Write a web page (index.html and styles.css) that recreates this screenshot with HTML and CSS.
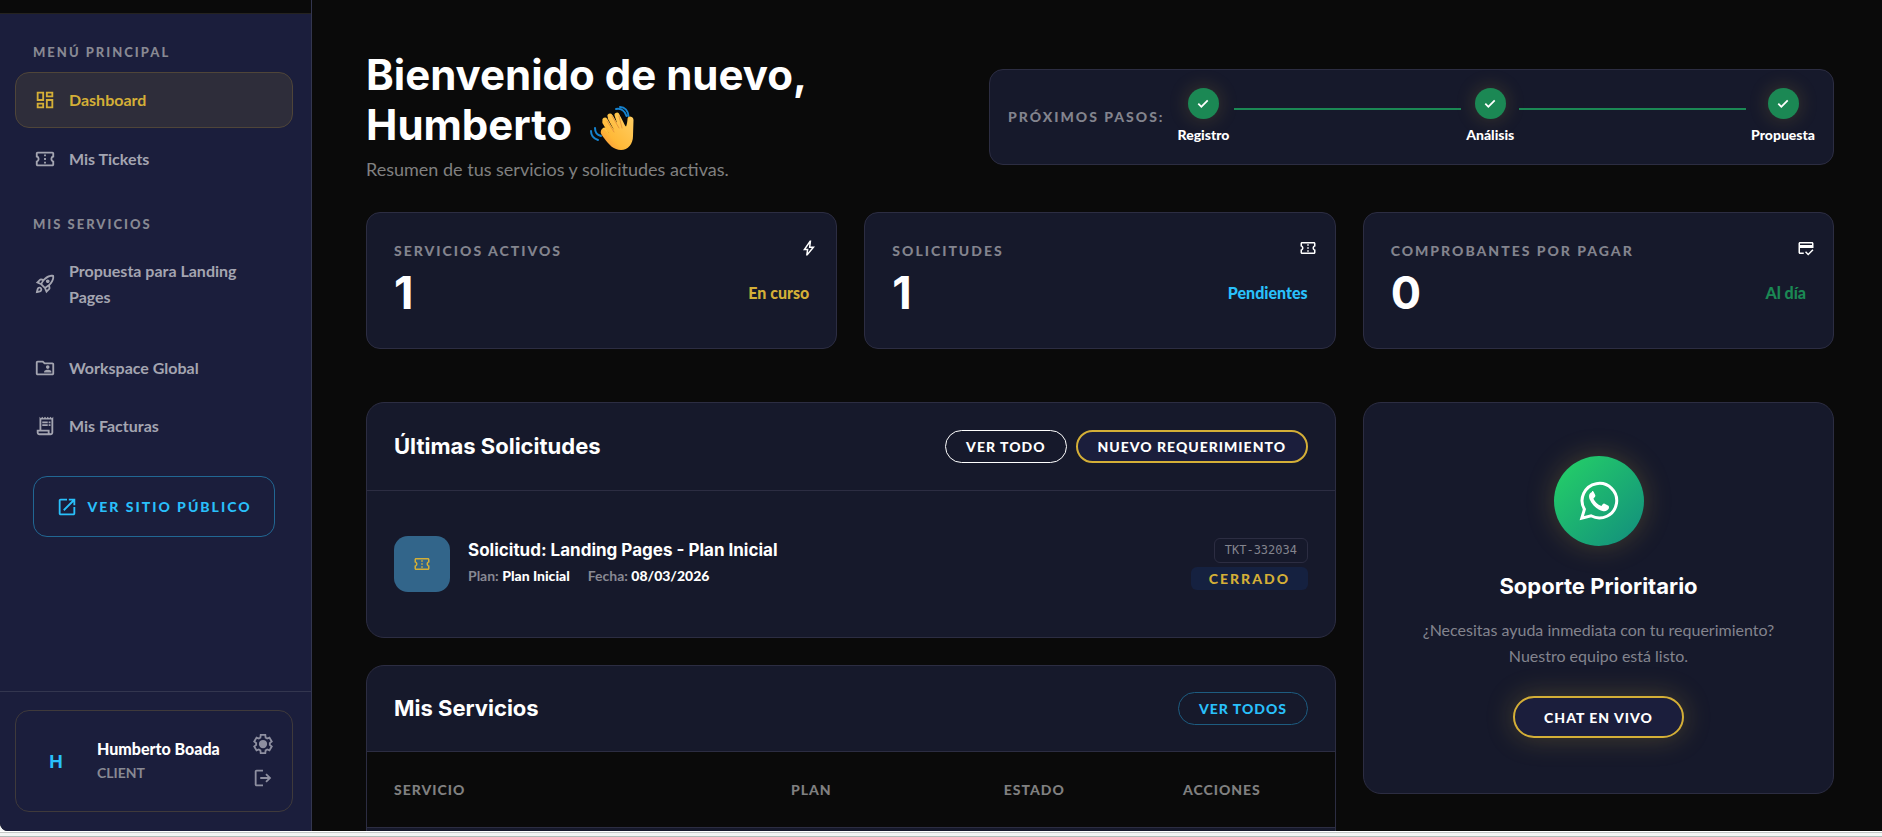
FILE: index.html
```html
<!DOCTYPE html>
<html lang="es">
<head>
    <meta charset="UTF-8">
    <meta name="viewport" content="width=device-width, initial-scale=1.0">
    <title>Dashboard</title>
    <link rel="stylesheet" href="styles.css">
</head>
<body>
    <svg class="sprite" aria-hidden="true">
        <symbol id="i-ticket" viewBox="0 0 24 24"><path d="M22 10V6c0-1.11-.9-2-2-2H4c-1.1 0-1.99.89-1.99 2v4c1.1 0 1.99.9 1.99 2s-.89 2-2 2v4c0 1.1.9 2 2 2h16c1.1 0 2-.9 2-2v-4c-1.1 0-2-.9-2-2s.9-2 2-2zm-2-1.46c-1.19.69-2 1.99-2 3.46s.81 2.77 2 3.46V18H4v-2.54c1.19-.69 2-1.99 2-3.46 0-1.48-.8-2.77-1.99-3.46L4 6h16v2.54zM11 15h2v2h-2zm0-4h2v2h-2zm0-4h2v2h-2z"/></symbol>
        <symbol id="i-check" viewBox="0 0 24 24"><path d="M9.5 18 4 12.5l1.9-1.9 3.6 3.6L18.1 5.6 20 7.5z"/></symbol>
    </svg>

    <div class="layout">
        <aside class="sidebar">
            <div class="sidebar-top"></div>
            <nav class="sidebar-nav">
                <h2 class="nav-title">MENÚ PRINCIPAL</h2>
                <a href="#" class="nav-link active">
                    <svg class="icon" viewBox="0 0 24 24"><path d="M19 5v2h-4V5h4M9 5v6H5V5h4m10 8v6h-4v-6h4M9 17v2H5v-2h4M21 3h-8v6h8V3zM11 3H3v10h8V3zm10 8h-8v10h8V11zm-10 4H3v6h8v-6z"/></svg>
                    Dashboard
                </a>
                <a href="#" class="nav-link">
                    <svg class="icon"><use href="#i-ticket"/></svg>
                    Mis Tickets
                </a>
                <h2 class="nav-title nav-title-services">MIS SERVICIOS</h2>
                <a href="#" class="nav-link nav-link-tall">
                    <svg class="icon" viewBox="0 0 24 24"><path d="M6 15c-.83 0-1.58.34-2.12.88C2.7 17.06 2 22 2 22s4.94-.7 6.12-1.88c.54-.54.88-1.29.88-2.12 0-1.66-1.34-3-3-3zm.71 3.71c-.28.28-2.17.76-2.17.76s.47-1.88.76-2.17c.17-.19.42-.3.7-.3.55 0 1 .45 1 1 0 .28-.11.53-.29.71zm10.71-5.06c6.36-6.36 4.24-11.31 4.24-11.31S16.71.22 10.35 6.58l-2.49-.5c-.65-.13-1.33.08-1.81.55L2 10.69l5 2.14L11.17 17l2.14 5 4.05-4.05c.47-.47.68-1.15.55-1.81l-.49-2.49zM7.41 10.83l-1.91-.82 1.97-1.97 1.44.29c-.57.83-1.08 1.7-1.5 2.5zm6.58 7.67l-.82-1.91c.8-.42 1.67-.93 2.49-1.5l.29 1.44-1.96 1.97zM16 12.24c-1.32 1.32-3.38 2.4-4.04 2.73l-2.93-2.93c.32-.65 1.4-2.71 2.73-4.04 4.68-4.68 8.23-3.99 8.23-3.99s.69 3.55-3.99 8.23zM15 11c1.1 0 2-.9 2-2s-.9-2-2-2-2 .9-2 2 .9 2 2 2z"/></svg>
                    Propuesta para Landing Pages
                </a>
                <a href="#" class="nav-link">
                    <svg class="icon" viewBox="0 0 24 24"><path d="M20 6h-8l-2-2H4c-1.1 0-1.99.9-1.99 2L2 18c0 1.1.9 2 2 2h16c1.1 0 2-.9 2-2V8c0-1.1-.9-2-2-2zm0 12H4V6h5.17l2 2H20v10z"/><circle cx="15" cy="11" r="2"/><path d="M19 17h-8v-1c0-1.33 2.67-2 4-2s4 .67 4 2v1z"/></svg>
                    Workspace Global
                </a>
                <a href="#" class="nav-link">
                    <svg class="icon" viewBox="0 0 24 24"><path d="M19.5 3.5L18 2l-1.5 1.5L15 2l-1.5 1.5L12 2l-1.5 1.5L9 2 7.5 3.5 6 2v14H3v3c0 1.66 1.34 3 3 3h12c1.66 0 3-1.34 3-3V2l-1.5 1.5zM15 20H6c-.55 0-1-.45-1-1v-1h10v2zm4-1c0 .55-.45 1-1 1s-1-.45-1-1v-3H8V5h11v14z"/><path d="M9 7h6v2H9zM16 7h2v2h-2zM9 10h6v2H9zM16 10h2v2h-2z"/></svg>
                    Mis Facturas
                </a>
                <a href="#" class="public-link">
                    <svg class="icon" viewBox="0 0 24 24"><path d="M19 19H5V5h7V3H5c-1.11 0-2 .9-2 2v14c0 1.1.89 2 2 2h14c1.1 0 2-.9 2-2v-7h-2v7zM14 3v2h3.59l-9.83 9.83 1.41 1.41L19 6.41V10h2V3h-7z"/></svg>
                    VER SITIO PÚBLICO
                </a>
            </nav>
            <div class="sidebar-footer">
                <div class="user-card">
                    <div class="avatar">H</div>
                    <div class="user-info">
                        <strong>Humberto Boada</strong>
                        <span>CLIENT</span>
                    </div>
                    <div class="user-actions">
                        <button type="button" aria-label="Configuración">
                            <svg class="icon" viewBox="0 0 24 24"><path class="outline" d="M19.43 12.98c.04-.32.07-.64.07-.98 0-.34-.03-.66-.07-.98l2.11-1.65-2.5-4.35-2.49 1c-.52-.4-1.08-.73-1.69-.98L14.5 2h-5l-.37 3.07c-.61.25-1.17.59-1.69.98l-2.49-1-2.5 4.32 2.12 1.65c-.04.32-.07.65-.07.98 0 .33.03.66.07.98l-2.12 1.65 2.5 4.35 2.49-1c.52.4 1.08.73 1.69.98L9.5 22h5l.37-3.07c.61-.25 1.17-.59 1.69-.98l2.49 1 2.5-4.32z"/><circle cx="12" cy="12" r="4.5"/></svg>
                        </button>
                        <button type="button" aria-label="Cerrar sesión">
                            <svg class="icon" viewBox="0 0 24 24"><path d="M5 5h7V3H5c-1.1 0-2 .9-2 2v14c0 1.1.9 2 2 2h7v-2H5V5z"/><path d="m16 17-1.4-1.45 2.55-2.55H9v-2h8.15L14.6 8.45 16 7l5 5-5 5z"/></svg>
                        </button>
                    </div>
                </div>
            </div>
        </aside>

        <main class="main">
            <header class="welcome">
                <div class="welcome-text">
                    <h1>Bienvenido de nuevo, Humberto
                        <svg class="wave" viewBox="0 0 44 44" role="img" aria-label="Saludo">
                            <defs>
                                <linearGradient id="skin" x1="0" y1="1" x2="1" y2="0">
                                    <stop offset="0" stop-color="#f58b3c"/>
                                    <stop offset=".35" stop-color="#ffb938"/>
                                    <stop offset="1" stop-color="#ffd066"/>
                                </linearGradient>
                            </defs>
                            <path class="motion" d="M1 25c0 4 2.5 7.5 7 9M5 22c0 4 2 7 6 8M26 3c5-1 9 2 10.500 7M30 1c5 0 8 4 8.500 9"/>
                            <path class="fingers" d="M17 29 14.5 24M22 26l-7-12M27 22 20 10M31 21 27 9M36 27c2-4 4-9 4-14"/>
                            <path fill="url(#skin)" d="M11 25c-1 2 1 4 3 7 5 7 10 12 17 12 7 0 12-6 12-14l.5-16c0-4-5-4-5.5 0l-1 7c-2 1-5-10-8-12-2-1-4 0-3 3l3 9-6-11c-2-3-6 0-5 3l6 11-7-9c-3-3-6 0-4 3l6 10-4-4c-2-2-4-1-4 1z"/>
                            <path class="crease" d="m17 15 7 11M22 10l7 12M29 10l3 12"/>
                        </svg>
                    </h1>
                    <p>Resumen de tus servicios y solicitudes activas.</p>
                </div>
                <div class="steps">
                    <span class="label">PRÓXIMOS PASOS:</span>
                    <div class="steps-track">
                        <div class="step">
                            <span class="step-dot"><svg><use href="#i-check"/></svg></span>
                            Registro
                        </div>
                        <div class="step-line"></div>
                        <div class="step">
                            <span class="step-dot"><svg><use href="#i-check"/></svg></span>
                            Análisis
                        </div>
                        <div class="step-line"></div>
                        <div class="step">
                            <span class="step-dot"><svg><use href="#i-check"/></svg></span>
                            Propuesta
                        </div>
                    </div>
                </div>
            </header>

            <section class="stats">
                <div class="stat-card">
                    <div class="label">SERVICIOS ACTIVOS</div>
                    <div class="stat-row">
                        <span class="stat-value">1</span>
                        <span class="stat-state gold">En curso</span>
                    </div>
                    <svg class="stat-icon" viewBox="0 0 24 24"><path d="m10.55 18.2 5.175-6.2h-4l.725-5.675L7.825 13H11.3l-.75 5.2ZM8 22l1-7H4l9-13h2l-1 8h6L10 22H8Z"/></svg>
                </div>
                <div class="stat-card">
                    <div class="label">SOLICITUDES</div>
                    <div class="stat-row">
                        <span class="stat-value">1</span>
                        <span class="stat-state cyan">Pendientes</span>
                    </div>
                    <svg class="stat-icon"><use href="#i-ticket"/></svg>
                </div>
                <div class="stat-card">
                    <div class="label">COMPROBANTES POR PAGAR</div>
                    <div class="stat-row">
                        <span class="stat-value">0</span>
                        <span class="stat-state green">Al día</span>
                    </div>
                    <svg class="stat-icon" viewBox="0 0 24 24"><path d="M20 4H4c-1.11 0-1.99.89-1.99 2L2 18c0 1.11.89 2 2 2h5v-2H4v-6h18V6c0-1.11-.89-2-2-2zm0 4H4V6h16v2zm-5.07 11.17l-2.83-2.83-1.41 1.41L14.93 22 22 14.93l-1.41-1.41-5.66 5.65z"/></svg>
                </div>
            </section>

            <div class="content">
                <div class="content-left">
                    <section class="card">
                        <div class="card-header">
                            <h2>Últimas Solicitudes</h2>
                            <div class="card-buttons">
                                <a href="#" class="btn">VER TODO</a>
                                <a href="#" class="btn btn-gold">NUEVO REQUERIMIENTO</a>
                            </div>
                        </div>
                        <div class="request">
                            <div class="request-icon"><svg><use href="#i-ticket"/></svg></div>
                            <div class="request-body">
                                <h3>Solicitud: Landing Pages - Plan Inicial</h3>
                                <p>
                                    <span>Plan: <b>Plan Inicial</b></span>
                                    <span>Fecha: <b>08/03/2026</b></span>
                                </p>
                            </div>
                            <div class="request-tags">
                                <span class="ticket-id">TKT-332034</span>
                                <span class="ticket-state">CERRADO</span>
                            </div>
                        </div>
                    </section>

                    <section class="card card-services">
                        <div class="card-header card-header-services">
                            <h2>Mis Servicios</h2>
                            <a href="#" class="btn btn-cyan">VER TODOS</a>
                        </div>
                        <table class="services">
                            <thead>
                                <tr>
                                    <th class="col-service">SERVICIO</th>
                                    <th class="col-plan">PLAN</th>
                                    <th>ESTADO</th>
                                    <th>ACCIONES</th>
                                </tr>
                            </thead>
                        </table>
                    </section>
                </div>

                <section class="card support">
                    <div class="support-icon">
                        <svg viewBox="0 0 40 40">
                            <path class="bubble" d="M2.8 37.2 5.4 28.3A17.3 17.3 0 1 1 12 34.8z"/>
                            <path d="M13 11c-3 1-3.5 4-2.5 7 2.5 6 7 10.5 13 12 3.5.8 6.5-1 6.5-4 0-.8-.3-1.2-1-1.6l-3.4-1.7c-.7-.3-1.2-.2-1.7.4l-1.5 1.9c-4-1.5-6.3-4-8-7.3l1.600-2c.4-.6.4-1 .2-1.6l-1.6-3.3c-.4-.7-.9-.9-1.6-.8z"/>
                        </svg>
                    </div>
                    <h2>Soporte Prioritario</h2>
                    <p>¿Necesitas ayuda inmediata con tu requerimiento? Nuestro equipo está listo.</p>
                    <a href="#" class="btn btn-gold btn-chat">CHAT EN VIVO</a>
                </section>
            </div>
        </main>
    </div>
    <div class="bottom-bar"></div>
</body>
</html>
```
FILE: styles.css
```css
:root {
    --bg: #0a0a0a;
    --navy: #1b1e3c;
    --card: #16192b;
    --line: #2c2d42;
    --muted: #888993;
    --gold: #d4af37;
    --cyan: #29c0fb;
    --green: #1b8854;
    --heading: Inter, "Open Sans", sans-serif;
}

* {
    margin: 0;
    padding: 0;
    box-sizing: border-box;
}

body {
    height: 100vh;
    display: flex;
    flex-direction: column;
    overflow: hidden;
    background: #f3f5f4;
    color: #fff;
    font-family: Lato, "Open Sans", sans-serif;
    font-size: 16px;
}

a {
    color: inherit;
    text-decoration: none;
}

svg {
    fill: currentColor;
}

.sprite {
    display: none;
}

.layout {
    flex: 1;
    min-height: 0;
    display: flex;
    overflow: hidden;
    background: var(--bg);
    border-bottom-left-radius: 8px;
}

.bottom-bar {
    height: 6px;
    border-top: 1px solid #fff;
    border-bottom: 1px solid #b0bcb8;
    box-shadow: inset 0 1px #c4c8c7;
}

/* Sidebar */
.sidebar {
    width: 312px;
    flex-shrink: 0;
    display: flex;
    flex-direction: column;
    background: var(--navy);
    border-right: 1px solid #33364f;
}

.sidebar-top {
    height: 14px;
    background: var(--bg);
    border-bottom: 1px solid #25231f;
}

.sidebar-nav {
    flex: 1;
    padding: 28px 18px 0 15px;
}

.nav-title {
    padding-left: 18px;
    margin-bottom: 10px;
    line-height: 20px;
    font-size: 13px;
    font-weight: 900;
    letter-spacing: 2px;
    color: var(--muted);
}

.nav-title-services {
    margin: 27px 0 10px;
}

.nav-link {
    display: flex;
    align-items: center;
    gap: 13px;
    min-height: 56px;
    margin-bottom: 2px;
    padding: 0 28px 0 18px;
    border: 1px solid transparent;
    border-radius: 14px;
    line-height: 26px;
    font-weight: 700;
    color: #a4a5b1;
}

.nav-link.active {
    margin-bottom: 3px;
    background: #2e2d3a;
    border-color: #4f4539;
    color: var(--gold);
}

.nav-link-tall {
    min-height: 80px;
    margin-bottom: 16px;
}

.icon {
    width: 22px;
    height: 22px;
    flex-shrink: 0;
}

.public-link {
    display: flex;
    align-items: center;
    justify-content: center;
    gap: 9px;
    height: 61px;
    margin: 22px 18px 0;
    border: 1px solid #216793;
    border-radius: 14px;
    font-size: 14px;
    font-weight: 900;
    letter-spacing: 2px;
    white-space: nowrap;
    color: var(--cyan);
}

.sidebar-footer {
    padding: 18px 18px 19px 15px;
    border-top: 1px solid #33364f;
}

.user-card {
    display: flex;
    align-items: center;
    height: 102px;
    padding: 0 18px;
    border: 1px solid #3f3a3b;
    border-radius: 14px;
}

.avatar {
    width: 44px;
    margin-right: 19px;
    text-align: center;
    font-family: var(--heading);
    font-size: 18px;
    font-weight: 700;
    color: var(--cyan);
}

.user-info {
    flex: 1;
    display: flex;
    flex-direction: column;
    line-height: 24px;
    white-space: nowrap;
}

.user-info strong {
    font-weight: 900;
}

.user-info span {
    font-size: 14px;
    font-weight: 700;
    color: var(--muted);
}

.user-actions {
    display: flex;
    flex-direction: column;
    gap: 12px;
}

.user-actions button {
    height: 22px;
    border: 0;
    background: none;
    color: #8e8fa0;
    cursor: pointer;
}

.outline {
    fill: none;
    stroke: currentColor;
    stroke-width: 2;
}

/* Main */
.main {
    flex: 1;
    min-width: 0;
    padding: 50px 48px 0 54px;
}

.welcome {
    display: flex;
    align-items: flex-start;
    justify-content: space-between;
    margin-bottom: 28px;
}

.welcome-text {
    width: 32%;
}

h1 {
    font-family: var(--heading);
    font-size: 42px;
    font-weight: 700;
    line-height: 50px;
}

.wave {
    width: 44px;
    height: 44px;
    margin-left: 8px;
    vertical-align: -10px;
}

.motion {
    fill: none;
    stroke: #1683cf;
    stroke-width: 2;
    stroke-linecap: round;
}

.fingers {
    fill: none;
    stroke: #ffc446;
    stroke-width: 5;
    stroke-linecap: round;
}

.crease {
    fill: none;
    stroke: #e9973a;
    stroke-linecap: round;
}

.welcome-text p {
    margin-top: 5px;
    line-height: 29px;
    font-size: 18px;
    color: #808080;
}

.label {
    font-size: 14px;
    font-weight: 900;
    line-height: 22px;
    letter-spacing: 2px;
    color: #83848e;
    white-space: nowrap;
}

.steps {
    flex: 0 1 845px;
    display: flex;
    align-items: center;
    gap: 13px;
    height: 96px;
    margin-top: 19px;
    padding: 0 18px;
    background: var(--card);
    border: 1px solid var(--line);
    border-radius: 14px;
}

.steps-track {
    flex: 1;
    display: flex;
    align-items: center;
    gap: 5px;
}

.step {
    display: flex;
    flex-direction: column;
    align-items: center;
    gap: 5px;
    line-height: 22px;
    font-size: 14px;
    font-weight: 900;
}

.step-dot {
    display: flex;
    align-items: center;
    justify-content: center;
    width: 31px;
    height: 31px;
    border-radius: 50%;
    background: var(--green);
    box-shadow: 0 0 20px rgba(212, 175, 55, 0.22);
}

.step-dot svg {
    width: 16px;
    height: 16px;
}

.step-line {
    flex: 1;
    height: 2px;
    margin-bottom: 16px;
    background: var(--green);
}

/* Stats */
.stats {
    display: grid;
    grid-template-columns: repeat(3, 1fr);
    gap: 27px;
    margin-bottom: 53px;
}

.stat-card {
    position: relative;
    height: 137px;
    padding: 27px;
    background: var(--card);
    border: 1px solid var(--line);
    border-radius: 14px;
}

.stat-row {
    display: flex;
    align-items: center;
    justify-content: space-between;
    margin-top: 4px;
    line-height: 54px;
}

.stat-value {
    font-family: var(--heading);
    font-size: 45px;
    font-weight: 700;
}

.stat-state {
    font-weight: 900;
}

.gold {
    color: var(--gold);
}

.cyan {
    color: var(--cyan);
}

.green {
    color: var(--green);
}

.stat-icon {
    position: absolute;
    top: 26px;
    right: 18px;
    width: 18px;
    height: 18px;
}

/* Cards */
.content {
    display: grid;
    grid-template-columns: 970fr 471fr;
    gap: 27px;
    align-items: start;
}

.content-left {
    display: flex;
    flex-direction: column;
    gap: 27px;
}

.card {
    overflow: hidden;
    background: var(--card);
    border: 1px solid var(--line);
    border-radius: 18px;
}

.card-services {
    padding-bottom: 48px;
}

.card-header {
    display: flex;
    align-items: center;
    justify-content: space-between;
    height: 88px;
    padding: 0 27px 1px;
    border-bottom: 1px solid var(--line);
}

.card-header-services {
    height: 86px;
}

.card h2 {
    font-family: var(--heading);
    font-size: 22px;
    font-weight: 700;
    line-height: 32px;
}

.card-buttons {
    display: flex;
    gap: 9px;
}

.btn {
    display: inline-flex;
    align-items: center;
    height: 33px;
    padding: 0 20px;
    border: 1px solid #fff;
    border-radius: 18px;
    font-size: 14px;
    font-weight: 900;
    letter-spacing: 1px;
}

.btn-gold {
    background: var(--navy);
    border: 2px solid var(--gold);
}

.btn-cyan {
    border-color: #1d5c80;
    color: var(--cyan);
}

.request {
    display: flex;
    align-items: center;
    gap: 18px;
    height: 146px;
    padding: 0 27px;
}

.request-icon {
    display: flex;
    align-items: center;
    justify-content: center;
    width: 56px;
    height: 56px;
    border-radius: 14px;
    background: #32658a;
    color: var(--gold);
}

.request-icon svg {
    width: 18px;
    height: 18px;
}

.request-body {
    flex: 1;
    padding-bottom: 4px;
}

.request-body h3 {
    font-family: var(--heading);
    font-size: 17px;
    font-weight: 700;
    line-height: 28px;
}

.request-body p {
    display: flex;
    gap: 18px;
    line-height: 24px;
    font-size: 14px;
    font-weight: 700;
    color: var(--muted);
}

.request-body b {
    color: #fff;
}

.request-tags {
    display: flex;
    flex-direction: column;
    align-items: flex-end;
    gap: 4px;
}

.ticket-id {
    padding: 0 10px;
    border: 1px solid var(--line);
    border-radius: 6px;
    line-height: 23px;
    font-family: "DejaVu Sans Mono", monospace;
    font-size: 12px;
    color: #83848e;
}

.ticket-state {
    padding: 0 18px;
    border-radius: 6px;
    background: #152140;
    line-height: 23px;
    font-size: 14px;
    font-weight: 900;
    letter-spacing: 2px;
    color: var(--gold);
}

.services {
    width: 100%;
    table-layout: fixed;
    border-spacing: 0;
    background: var(--bg);
}

.services th {
    height: 76px;
    padding: 0 27px;
    border-bottom: 1px solid var(--line);
    text-align: left;
    font-size: 14px;
    font-weight: 900;
    letter-spacing: 1px;
    color: #808080;
}

.col-service {
    width: 41%;
}

.col-plan {
    width: 22%;
}

/* Support */
.support {
    display: flex;
    flex-direction: column;
    align-items: center;
    padding: 53px 50px 55px;
    text-align: center;
}

.support-icon {
    display: flex;
    align-items: center;
    justify-content: center;
    width: 90px;
    height: 90px;
    margin-bottom: 24px;
    border-radius: 50%;
    background: linear-gradient(135deg, #25d366, #128c7e);
    box-shadow: 0 0 28px rgba(212, 175, 55, 0.25);
}

.support-icon svg {
    width: 40px;
    height: 40px;
}

.bubble {
    fill: none;
    stroke: currentColor;
    stroke-width: 3;
}

.support p {
    margin: 15px 0 27px;
    line-height: 26px;
    color: #83848e;
}

.btn-chat {
    height: 42px;
    padding: 0 29px;
    border-radius: 21px;
    box-shadow: 0 0 28px rgba(212, 175, 55, 0.25);
}
```
